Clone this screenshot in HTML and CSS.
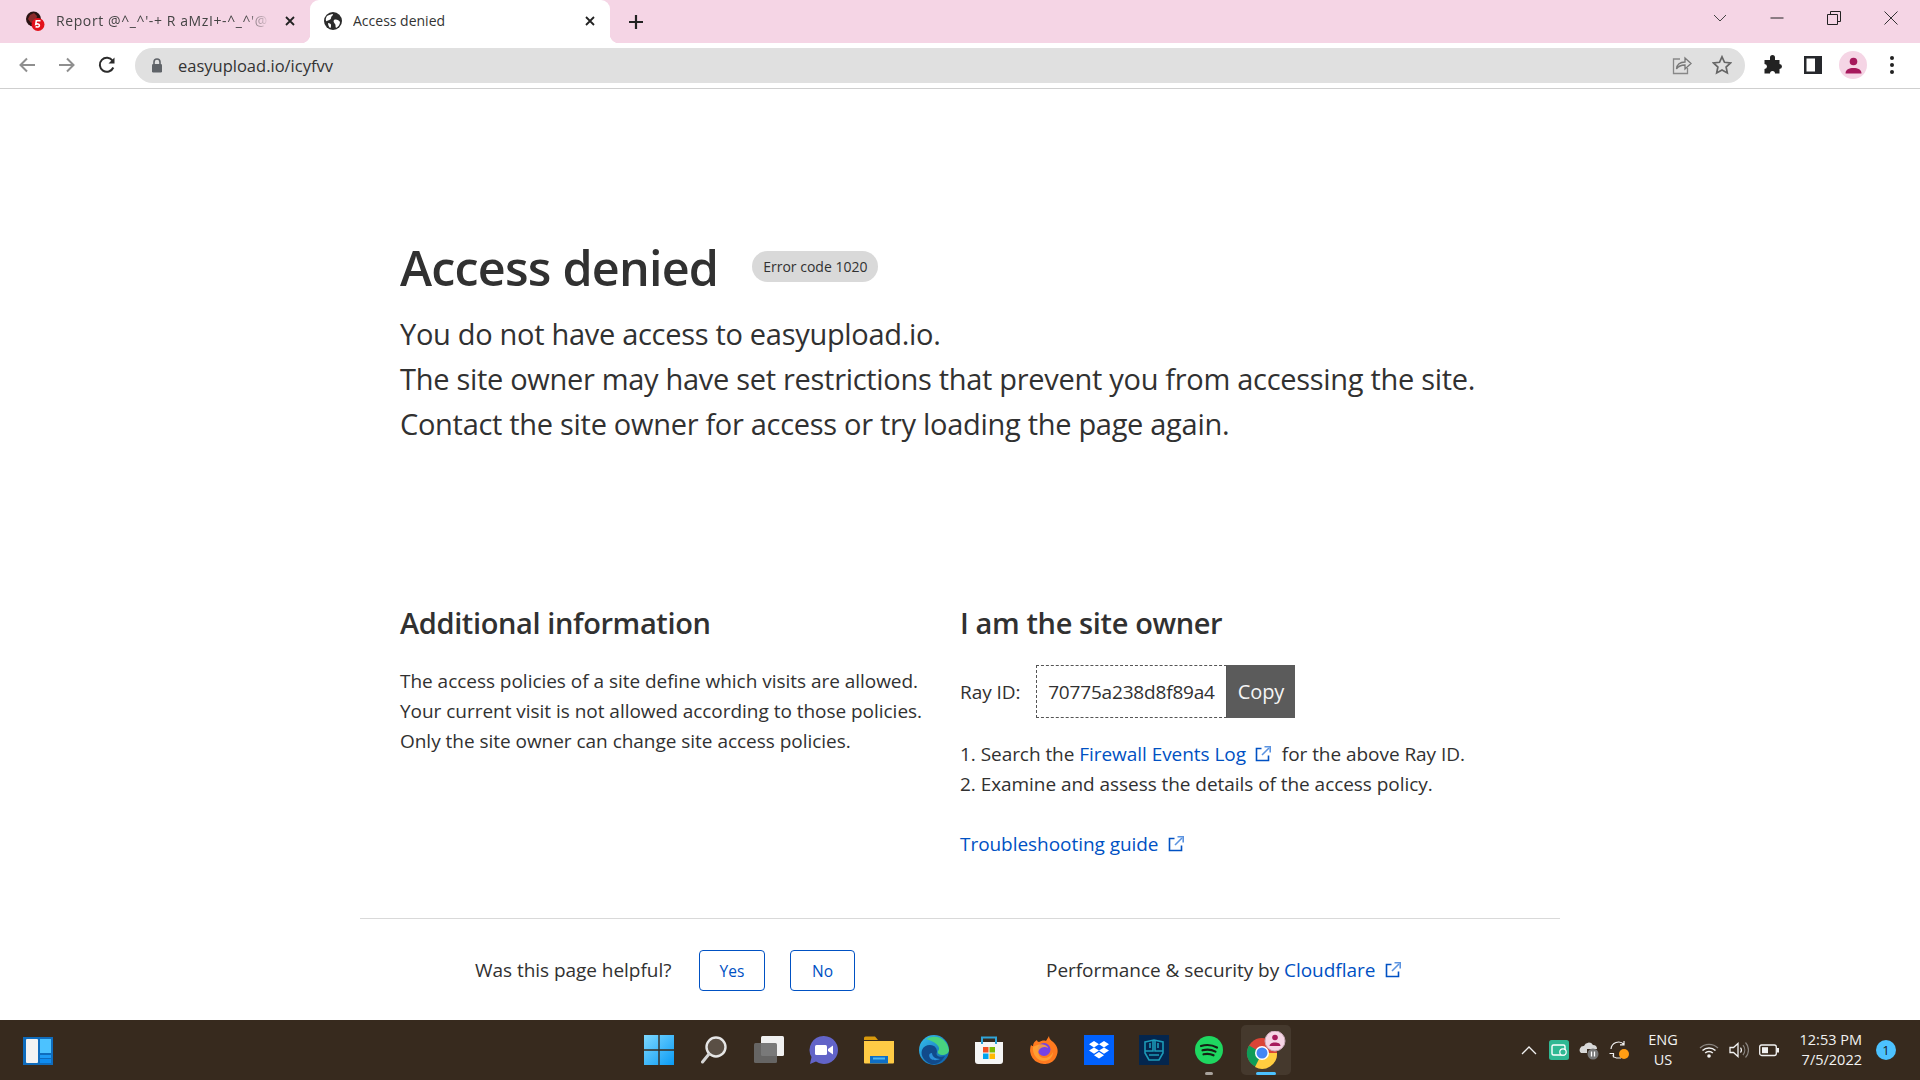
FILE: index.html
```html
<!DOCTYPE html>
<html>
<head>
  <meta charset="utf-8">
  <title>Access denied</title>
  <link rel="stylesheet" href="styles.css">
</head>
<body>
  <svg class="defs" width="0" height="0">
    <symbol id="ext" viewBox="0 0 16 16">
      <path d="M6.5 2.5H1.5V14.5H13.5V9.5" fill="none" stroke="currentColor" stroke-width="1.6"/>
      <path d="M7 9L14 2" fill="none" stroke="#5b93e0" stroke-width="1.6"/>
      <path d="M9.5 .8H15.2V6.5" fill="none" stroke="#5b93e0" stroke-width="1.6"/>
    </symbol>
    <symbol id="globe" viewBox="0 0 18 18">
      <circle cx="9" cy="9" r="9" fill="#2b2b2b"/>
      <path d="M3 4c2-1 4-2 6-2 0 2-2 2-2 4S4 8 3 9 1 7 3 4zM10 8c2-1 5 0 6 2 0 3-2 5-4 6-1-2 0-3-1-4s-2-3-1-4zM4 11c2 0 3 1 3 2s0 3-1 3c-1-1-2-3-2-5z" fill="#fff"/>
    </symbol>
    <symbol id="x" viewBox="0 0 12 12">
      <path d="M2 2L10 10M10 2L2 10" fill="none" stroke="#222" stroke-width="1.8"/>
    </symbol>
  </svg>

  <div class="tabstrip">
    <div class="tab">
      <svg class="fav" width="20" height="20" viewBox="0 0 20 20">
        <circle cx="8.500" cy="8" r="7.500" fill="#2a1414"/>
        <path d="M5 4l4-2 3 3-1 5-5 2-3-4z" fill="#8a2a2a"/>
        <circle cx="13" cy="13.500" r="6.500" fill="#e3111b"/>
        <path d="M15.500 9.800h-4.200l-.5 3.400c1.300-.7 3.600-.4 3.600 1.300 0 1.700-2.400 1.900-3.800 1" fill="none" stroke="#fff" stroke-width="1.600"/>
      </svg>
      <span class="tab-title fade">Report @^_^'-+ R aMzI+-^_^'@</span>
      <svg class="tab-x" width="12" height="12"><use href="#x"/></svg>
    </div>
    <div class="tab active">
      <svg class="fav" width="18" height="18"><use href="#globe"/></svg>
      <span class="tab-title">Access denied</span>
      <svg class="tab-x" width="12" height="12"><use href="#x"/></svg>
    </div>
    <svg class="newtab" width="16" height="16" viewBox="0 0 16 16"><path d="M8 1V15M1 8H15" stroke="#222" stroke-width="2.200"/></svg>
    <div class="winctl">
      <svg width="14" height="14" viewBox="0 0 14 14"><path d="M1 4L7 10L13 4" fill="none" stroke="#444" stroke-width="1"/></svg>
      <svg width="14" height="14" viewBox="0 0 14 14"><path d="M0.500 7H13.500" stroke="#222" stroke-width="1"/></svg>
      <svg width="14" height="14" viewBox="0 0 14 14"><path d="M.5 3.500H10.500V13.500H.5zM3.500 3.500V.5H13.500V10.500H10.500" fill="none" stroke="#222" stroke-width="1"/></svg>
      <svg width="14" height="14" viewBox="0 0 14 14"><path d="M.5 .5L13.500 13.500M13.500 .5L.5 13.500" fill="none" stroke="#333" stroke-width="1"/></svg>
    </div>
  </div>

  <div class="toolbar">
    <svg class="tb-btn" width="18" height="18" viewBox="0 0 18 18"><path d="M17 9H3M9 2.500L2.500 9L9 15.500" fill="none" stroke="#8f8f8f" stroke-width="2"/></svg>
    <svg class="tb-btn" width="18" height="18" viewBox="0 0 18 18"><path d="M1 9H15M9 2.500L15.500 9L9 15.500" fill="none" stroke="#8f8f8f" stroke-width="2"/></svg>
    <svg class="tb-btn" width="18" height="18" viewBox="0 0 18 18"><path d="M15.300 11.500A7 7 0 1 1 14.600 4.800" fill="none" stroke="#2b2b2b" stroke-width="2"/><path d="M16.500 1.500V7.500H10.500z" fill="#2b2b2b"/></svg>
    <div class="omnibox">
      <svg class="lock" width="12" height="15" viewBox="0 0 12 15"><path d="M3 6V4a3 3 0 0 1 6 0v2" fill="none" stroke="#5f6368" stroke-width="1.600"/><rect x="1" y="6" width="10" height="8.500" rx="1.200" fill="#5f6368"/></svg>
      <span class="url">easyupload.io/icyfvv</span>
      <svg class="omni-share" width="20" height="20" viewBox="0 0 20 20"><path d="M8 4H1.500V18.500H15.500V13" fill="none" stroke="#888" stroke-width="1.300"/><path d="M4.500 14c.5-4.500 4-7 8.500-7V3l6 5.500-6 5.500v-4c-3.500 0-6.500 1-8.500 4z" fill="none" stroke="#777" stroke-width="1.300"/></svg>
      <svg class="omni-star" width="20" height="20" viewBox="0 0 20 20"><path d="M10 1.800l2.500 5.500 6 .7-4.400 4 1.200 5.900L10 15l-5.300 2.900 1.200-5.900-4.400-4 6-.7z" fill="none" stroke="#666" stroke-width="1.700"/></svg>
    </div>
    <div class="tb-right">
      <svg width="20" height="20" viewBox="0 0 20 20"><path d="M7 2.500a2.500 2.500 0 0 1 5 0V5h4.500v4a2.500 2.500 0 0 1 0 5v4.500H12a2.500 2.500 0 0 0-5 0H1.500V14a2.500 2.500 0 0 0 0-5V5H7z" fill="#222"/></svg>
      <svg width="18" height="18" viewBox="0 0 18 18"><path d="M0 0H18V18H0z" fill="#26282c"/><rect x="2.500" y="2.500" width="8.500" height="13" fill="#fff"/></svg>
      <div class="avatar"><svg width="17" height="17" viewBox="0 0 17 17"><circle cx="8.500" cy="4.500" r="3.800" fill="#a6195c"/><path d="M.5 16.500c0-4 3.500-5.500 8-5.500s8 1.500 8 5.500z" fill="#a6195c"/></svg></div>
      <div class="dots"><i></i><i></i><i></i></div>
    </div>
  </div>

  <main class="page">
    <div class="wrap">
      <div class="head">
        <h1>Access denied</h1>
        <span class="badge">Error code 1020</span>
      </div>
      <p class="lead">You do not have access to easyupload.io.</p>
      <p class="lead">The site owner may have set restrictions that prevent you from accessing the site.</p>
      <p class="lead">Contact the site owner for access or try loading the page again.</p>

      <div class="cols">
        <section class="col">
          <h2>Additional information</h2>
          <p class="copy">The access policies of a site define which visits are allowed.</p>
          <p class="copy">Your current visit is not allowed according to those policies.</p>
          <p class="copy">Only the site owner can change site access policies.</p>
        </section>
        <section class="col">
          <h2>I am the site owner</h2>
          <div class="ray">
            <span class="ray-label">Ray ID:</span>
            <span class="ray-id">70775a238d8f89a4</span>
            <span class="ray-copy">Copy</span>
          </div>
          <ol class="steps">
            <li>1. Search the <a href="#">Firewall Events Log<svg class="ext" width="16" height="16"><use href="#ext"/></svg></a> for the above Ray ID.</li>
            <li>2. Examine and assess the details of the access policy.</li>
          </ol>
          <a class="guide" href="#">Troubleshooting guide<svg class="ext" width="16" height="16"><use href="#ext"/></svg></a>
        </section>
      </div>
    </div>

    <footer class="foot">
      <span class="helpful">Was this page helpful?</span>
      <button class="vote yes">Yes</button>
      <button class="vote">No</button>
      <span class="perf">Performance &amp; security by <a href="#">Cloudflare<svg class="ext" width="16" height="16"><use href="#ext"/></svg></a></span>
    </footer>
  </main>

  <div class="taskbar">
    <div class="task-left">
      <svg width="30" height="28" viewBox="0 0 30 28"><rect width="30" height="28" fill="#0f6cbd"/><rect x="3" y="2" width="12" height="24" rx="1" fill="#f3f3f3"/><rect x="17" y="2" width="11" height="14" fill="#4cc2ff"/><rect x="17" y="18" width="11" height="3" fill="#1e9bf5"/><rect x="17" y="22" width="11" height="4" fill="#0f8cf0"/></svg>
    </div>
    <div class="task-mid">
      <div class="slot"><svg width="30" height="30" viewBox="0 0 30 30"><defs><linearGradient id="w" x1="0" y1="0" x2="1" y2="1"><stop offset="0" stop-color="#7dd8ff"/><stop offset="1" stop-color="#0a9bf5"/></linearGradient></defs><path d="M0 0H14.300V14.300H0zM15.700 0H30V14.300H15.700zM0 15.700H14.300V30H0zM15.700 15.700H30V30H15.700z" fill="url(#w)"/></svg></div>
      <div class="slot"><svg width="26" height="28" viewBox="0 0 26 28"><circle cx="15" cy="11" r="9.500" fill="#5a4f45" stroke="#e6e6e6" stroke-width="2.400"/><path d="M8 18L1.500 26" stroke="#d5d5d5" stroke-width="3" stroke-linecap="round"/></svg></div>
      <div class="slot"><svg width="30" height="28" viewBox="0 0 30 28"><rect x="7" y="0" width="23" height="20" rx="1.500" fill="#f0f0f0"/><rect x="0" y="7" width="23" height="20" rx="1.500" fill="#6b6b6b" fill-opacity=".9"/></svg></div>
      <div class="slot"><svg width="30" height="30" viewBox="0 0 30 30"><path d="M15 1a14 14 0 1 1-8 25.500L1 29l1.500-7A14 14 0 0 1 15 1z" fill="#6264c8"/><rect x="6" y="10" width="12" height="10" rx="1.500" fill="#fff"/><path d="M19 14l5-3.500v9L19 16z" fill="#fff"/></svg></div>
      <div class="slot"><svg width="30" height="28" viewBox="0 0 30 28"><path d="M0 2a1.500 1.500 0 0 1 1.500-1.500H11l3 3.500H0z" fill="#d99a0c"/><path d="M0 5H30V26.500a1 1 0 0 1-1 1H1a1 1 0 0 1-1-1z" fill="#ffcb45"/><path d="M6 20H24V27.500H6z" fill="#0f6fc6"/><rect x="9" y="21.500" width="12" height="2" fill="#51b8f0"/></svg></div>
      <div class="slot"><svg width="30" height="30" viewBox="0 0 30 30"><defs><linearGradient id="e" x1="0" y1="0" x2="1" y2="1"><stop offset="0" stop-color="#35c1f1"/><stop offset="1" stop-color="#0c59a4"/></linearGradient></defs><circle cx="15" cy="15" r="15" fill="url(#e)"/><path d="M7 4a15 15 0 0 1 23 11c0 3-3 5-7 5-3 0-5-2-4-4 1-1 1-2 1-3-1-4-6-7-13-9z" fill="#48d27f"/><path d="M3 15c2-5 8-6 12-4 3 2 3 5 3 6-2 4 3 6 8 4-3 6-9 9-14 8-6-2-11-8-9-14z" fill="#114a8b"/><path d="M13 18c0 3 3 6 8 6-2 1-6 2-9 0-3-3-2-6 1-6z" fill="#2a8fd8"/></svg></div>
      <div class="slot"><svg width="30" height="30" viewBox="0 0 30 30"><path d="M1 7H29V26a3 3 0 0 1-3 3H4a3 3 0 0 1-3-3z" fill="#f5f5f5"/><path d="M8 9V2.500H22V9" fill="none" stroke="#30a4d8" stroke-width="2"/><rect x="9" y="12" width="5.500" height="5.500" fill="#f25022"/><rect x="15.500" y="12" width="5.500" height="5.500" fill="#7fba00"/><rect x="9" y="18.500" width="5.500" height="5.500" fill="#00a4ef"/><rect x="15.500" y="18.500" width="5.500" height="5.500" fill="#ffb900"/></svg></div>
      <div class="slot"><svg width="30" height="30" viewBox="0 0 30 30"><path d="M15 29A14 14 0 0 1 2 10c1 1 1.500 1 2 1 0-3 2-5 4-6 0 1 1 2 2 2 2-1 5-2 7-1 1-2 2-3 3-5 0 4 4 5 6 8 4 5 3 10 0 15-3 4-7 5-11 5z" fill="#ff7a1f"/><circle cx="15" cy="14.500" r="6.500" fill="#7542e5"/><path d="M4 12c3-2 8-4 12-2 2 1 3 2 3 3-3-2-7-1-9 2-2 4 1 8 5 8 4 0 7-2 9-6 0 5-4 9-9 9-6 0-12-6-11-14z" fill="#ffa436" fill-opacity=".85"/></svg></div>
      <div class="slot"><svg width="30" height="30" viewBox="0 0 30 30"><rect width="30" height="30" fill="#0061fe"/><path d="M10 6l5 3.200-5 3.200-5-3.200zM20 6l5 3.200-5 3.200-5-3.200zM10 12.400l5 3.200-5 3.200-5-3.200zM20 12.400l5 3.200-5 3.200-5-3.200zM15 17l5 3.200-5 3.200-5-3.200z" fill="#fff"/></svg></div>
      <div class="slot"><svg width="30" height="30" viewBox="0 0 30 30"><rect width="30" height="30" fill="#04264e"/><path d="M6 7L15 5l9 2v11l-4 7H10l-4-7z" fill="none" stroke="#1c9bb8" stroke-width="1.600"/><path d="M14 5v11H6M16 5v11h8M11 8v5M19 8v5M10 20h10" fill="none" stroke="#1c9bb8" stroke-width="1.600"/></svg></div>
      <div class="slot spot"><svg width="28" height="28" viewBox="0 0 28 28"><circle cx="14" cy="14" r="14" fill="#1ed760"/><path d="M6 10c5-1.500 11-1.200 16 1.500M7.500 14.300c4.500-1.200 9-.8 13 1.300M8.500 18.300c3.500-.8 7-.5 10 1" fill="none" stroke="#152015" stroke-width="2.200" stroke-linecap="round"/></svg></div>
      <div class="slot chrome">
        <svg width="40" height="38" viewBox="0 0 40 38"><g transform="translate(0 6)"><circle cx="16" cy="16" r="15" fill="#db4437"/><path d="M16 16L3 8.500A15 15 0 0 0 10 30z" fill="#0f9d58"/><path d="M16 16L9 30A15 15 0 0 0 31 16z" fill="#ffcd40"/><circle cx="16" cy="16" r="7" fill="#fff"/><circle cx="16" cy="16" r="5.500" fill="#4285f4"/></g><circle cx="29" cy="10" r="10" fill="#f5d5e5" stroke="#c9a8b8"/><circle cx="29" cy="6.500" r="2.800" fill="#a6195c"/><path d="M23.500 15c0-2.500 2.500-3.500 5.500-3.500s5.500 1 5.500 3.500z" fill="#a6195c"/></svg>
      </div>
    </div>
    <div class="task-right">
      <svg class="tray" width="20" height="20" viewBox="0 0 20 20"><path d="M3 14L10 7L17 14" fill="none" stroke="#f2f2f2" stroke-width="1.300"/></svg>
      <svg class="tray" width="20" height="20" viewBox="0 0 20 20"><rect width="20" height="20" rx="2.500" fill="#2fb893"/><rect x="3" y="5" width="13" height="10" rx="1.500" fill="none" stroke="#fff" stroke-width="1.400"/><circle cx="14" cy="12" r="3.200" fill="#2fb893" stroke="#fff" stroke-width="1.200"/></svg>
      <svg class="tray" width="20" height="20" viewBox="0 0 20 20"><path d="M2 13a4 4 0 0 1 3-7 5 5 0 0 1 9-1 4 4 0 0 1 4 4H8v4z" fill="#d8d8d8"/><circle cx="14" cy="14" r="5.500" fill="#777"/><path d="M12.500 11.500v5M15.500 11.500v5" stroke="#fff" stroke-width="1.300"/></svg>
      <svg class="tray" width="20" height="20" viewBox="0 0 20 20"><path d="M2 9a7.500 7.500 0 0 1 13-4.500M15 1v3.800h-4M12 18H7.500A7 7 0 0 1 3.500 15.500M.5 13.500h4v4" fill="none" stroke="#f2f2f2" stroke-width="1.200"/><circle cx="15" cy="14" r="5" fill="#ff9d14"/></svg>
      <div class="lang"><span>ENG</span><span>US</span></div>
      <svg class="tray" width="20" height="20" viewBox="0 0 20 20"><path d="M1 8a13 13 0 0 1 18 0" fill="none" stroke="#8a8580" stroke-width="1.300"/><path d="M3.500 10.500a9.500 9.500 0 0 1 13 0M6.200 13a5.500 5.500 0 0 1 7.600 0" fill="none" stroke="#f2f2f2" stroke-width="1.500"/><circle cx="10" cy="16" r="1.800" fill="#f2f2f2"/></svg>
      <svg class="tray" width="20" height="20" viewBox="0 0 20 20"><path d="M1 7.500H4.500L9 3.500V16.500L4.500 12.500H1z" fill="none" stroke="#f2f2f2" stroke-width="1.300"/><path d="M11.500 7.500a4 4 0 0 1 0 5" fill="none" stroke="#f2f2f2" stroke-width="1.200"/><path d="M14 5a8 8 0 0 1 0 10M16.500 2.500a11 11 0 0 1 0 15" fill="none" stroke="#8a8580" stroke-width="1.200"/></svg>
      <svg class="tray" width="20" height="20" viewBox="0 0 20 20"><rect x=".7" y="5" width="16.600" height="10.500" rx="2" fill="none" stroke="#f2f2f2" stroke-width="1.300"/><rect x="3" y="7.200" width="6" height="6" fill="#f2f2f2"/><rect x="18" y="8" width="2" height="4.500" fill="#f2f2f2"/></svg>
      <div class="clock"><span>12:53 PM</span><span>7/5/2022</span></div>
      <span class="notif">1</span>
    </div>
  </div>
</body>
</html>
```
FILE: styles.css
```css
* { box-sizing: border-box; }

html, body {
  margin: 0;
  height: 1080px;
  overflow: hidden;
}

body {
  display: flex;
  flex-direction: column;
  background: #fff;
  font-family: "Open Sans", "Noto Sans", sans-serif;
  color: #313131;
}

.defs { position: absolute; }

/* browser chrome */
.tabstrip {
  height: 43px;
  display: flex;
  align-items: stretch;
  background: #f5d5e5;
  flex: none;
}

.tab {
  width: 310px;
  display: flex;
  align-items: center;
  padding: 0 14px 2px 25px;
  font-size: 14px;
  color: #444;
}

.tab.active {
  width: 300px;
  background: #fff;
  border-radius: 9px 9px 0 0;
  padding-left: 14px;
  color: #333;
  position: relative;
}

.tab.active::before,
.tab.active::after {
  content: "";
  position: absolute;
  bottom: 0;
  width: 9px;
  height: 9px;
}
.tab.active::before { left: -9px; background: radial-gradient(circle at 0 0, transparent 9px, #fff 9.500px); }
.tab.active::after { right: -9px; background: radial-gradient(circle at 100% 0, transparent 9px, #fff 9.500px); }

.fav { flex: none; margin-right: 11px; }
.tab-title { flex: 1; white-space: nowrap; overflow: hidden; }
.fade {
  letter-spacing: .6px;
  -webkit-mask-image: linear-gradient(90deg, #000 88%, transparent);
  mask-image: linear-gradient(90deg, #000 88%, transparent);
}
.tab-x { flex: none; margin-left: 14px; }

.newtab { align-self: center; margin: 0 0 0 18px; }

.winctl {
  margin-left: auto;
  display: flex;
  align-items: center;
  gap: 43px;
  padding: 0 22px 7px 0;
}

.toolbar {
  height: 46px;
  flex: none;
  display: flex;
  align-items: center;
  padding: 0 26px 1px 18px;
  border-bottom: 1px solid #cfcfcf;
}

.tb-btn { margin-right: 22px; }
.tb-btn:nth-child(3) { margin-right: 19px; }

.omnibox {
  flex: 1;
  height: 35px;
  border-radius: 18px;
  background: #e0e0e0;
  display: flex;
  align-items: center;
  padding: 0 13px 0 16px;
}

.lock { margin-right: 15px; }

.url {
  flex: 1;
  font-size: 16.500px;
  color: #333;
}

.omni-share { margin-right: 20px; }

.tb-right {
  display: flex;
  align-items: center;
  margin-left: 18px;
  gap: 21px;
}

.avatar {
  width: 28px;
  height: 28px;
  margin: 0 -4px;
  border-radius: 50%;
  background: #f5d5e5;
  display: flex;
  align-items: center;
  justify-content: center;
}

.dots {
  width: 4px;
  display: flex;
  flex-direction: column;
  gap: 3px;
  margin-left: 6px;
}
.dots i {
  width: 4px;
  height: 4px;
  border-radius: 50%;
  background: #222;
}

/* page */
.page {
  flex: 1;
  min-height: 0;
  overflow: hidden;
  display: flex;
  flex-direction: column;
  align-items: center;
}

.wrap {
  width: 1200px;
  padding: 140px 40px 0;
}

.head {
  display: flex;
  align-items: center;
  height: 75px;
  margin-bottom: 7px;
}

h1 {
  margin: 2px 34px 0 0;
  font-size: 48.500px;
  font-weight: 600;
  letter-spacing: -.8px;
  line-height: 75px;
}

.badge {
  height: 31px;
  padding: 0 11px;
  border-radius: 16px;
  background: #d9d9d9;
  font-size: 14px;
  line-height: 31px;
}

.lead {
  margin: 0;
  font-size: 29px;
  line-height: 45px;
  letter-spacing: -.3px;
}

.cols {
  display: grid;
  grid-template-columns: 560px 1fr;
  margin-top: 158px;
}

h2 {
  margin: 0 0 24px;
  font-size: 29px;
  font-weight: 600;
  line-height: 38px;
  letter-spacing: -.38px;
}

.copy {
  margin: 0;
  font-size: 19px;
  line-height: 30px;
  letter-spacing: -.03px;
}

.ray {
  display: flex;
  align-items: center;
  margin-top: -1px;
  height: 53px;
  font-size: 19px;
  letter-spacing: -.05px;
}

.ray-label { width: 76px; }

.ray-id {
  width: 191px;
  height: 53px;
  border: 1px dashed #555;
  border-right-style: solid;
  text-align: center;
  line-height: 53px;
  letter-spacing: -.18px;
}

.ray-copy {
  width: 68px;
  height: 53px;
  background: #5b5b5b;
  color: #f5f5f5;
  text-align: center;
  line-height: 53px;
  font-size: 20px;
}

.steps {
  list-style: none;
  margin: 21px 0 30px;
  padding: 0;
  font-size: 19px;
  line-height: 30px;
  letter-spacing: -.05px;
}

a {
  color: #0051c3;
  text-decoration: none;
}

.guide {
  display: block;
  font-size: 19px;
  line-height: 30px;
  letter-spacing: -.05px;
}

.ext {
  margin: 0 9px 0 10px;
  vertical-align: -1px;
}

.steps .ext { margin: 0 6px 0 9px; }

.foot {
  width: 1200px;
  margin-top: 59px;
  border-top: 1px solid #d9d9d9;
  padding: 30px 0 0 115px;
  display: flex;
  align-items: center;
  font-size: 19px;
  letter-spacing: -.04px;
}

.helpful { width: 224px; }

.vote {
  width: 65px;
  height: 41px;
  margin-top: 1px;
  background: #fff;
  border: 1.500px solid #0051c3;
  border-radius: 4px;
  color: #0051c3;
  font-family: inherit;
  font-size: 15.500px;
}

.yes {
  width: 66px;
  margin-right: 25px;
}

.perf { margin-left: 191px; }

/* windows taskbar */
.taskbar {
  height: 60px;
  flex: none;
  background: #372a1e;
  display: grid;
  grid-template-columns: 1fr auto 1fr;
  align-items: center;
  color: #f2f2f2;
}

.task-left { padding: 2px 0 0 23px; display: flex; }

.task-mid { display: flex; padding-left: 2px; }

.slot {
  width: 55px;
  height: 50px;
  display: flex;
  align-items: center;
  justify-content: center;
  position: relative;
}

.spot::after,
.chrome::after {
  content: "";
  position: absolute;
  left: 50%;
  bottom: 0;
  height: 3px;
  border-radius: 2px;
  transform: translateX(-50%);
}
.spot::after { width: 8px; background: #a8a29c; }
.chrome::after { width: 20px; background: #4cc2ff; }

.chrome {
  background: rgba(255, 255, 255, .07);
  border-radius: 5px;
  width: 50px;
  margin-left: 5px;
}

.task-right {
  justify-self: end;
  display: flex;
  align-items: center;
  padding-right: 24px;
  font-size: 14.500px;
}

.tray { margin-right: 10px; }

.lang,
.clock {
  display: flex;
  flex-direction: column;
  line-height: 20px;
}

.lang {
  width: 30px;
  margin: 0 21px 0 9px;
  align-items: center;
}

.clock {
  width: 70px;
  margin-left: 3px;
  align-items: flex-end;
}

.notif {
  width: 20px;
  height: 20px;
  margin-left: 14px;
  border-radius: 50%;
  background: #4cc2ff;
  color: #1a1a1a;
  font-size: 13px;
  line-height: 20px;
  text-align: center;
}
```
